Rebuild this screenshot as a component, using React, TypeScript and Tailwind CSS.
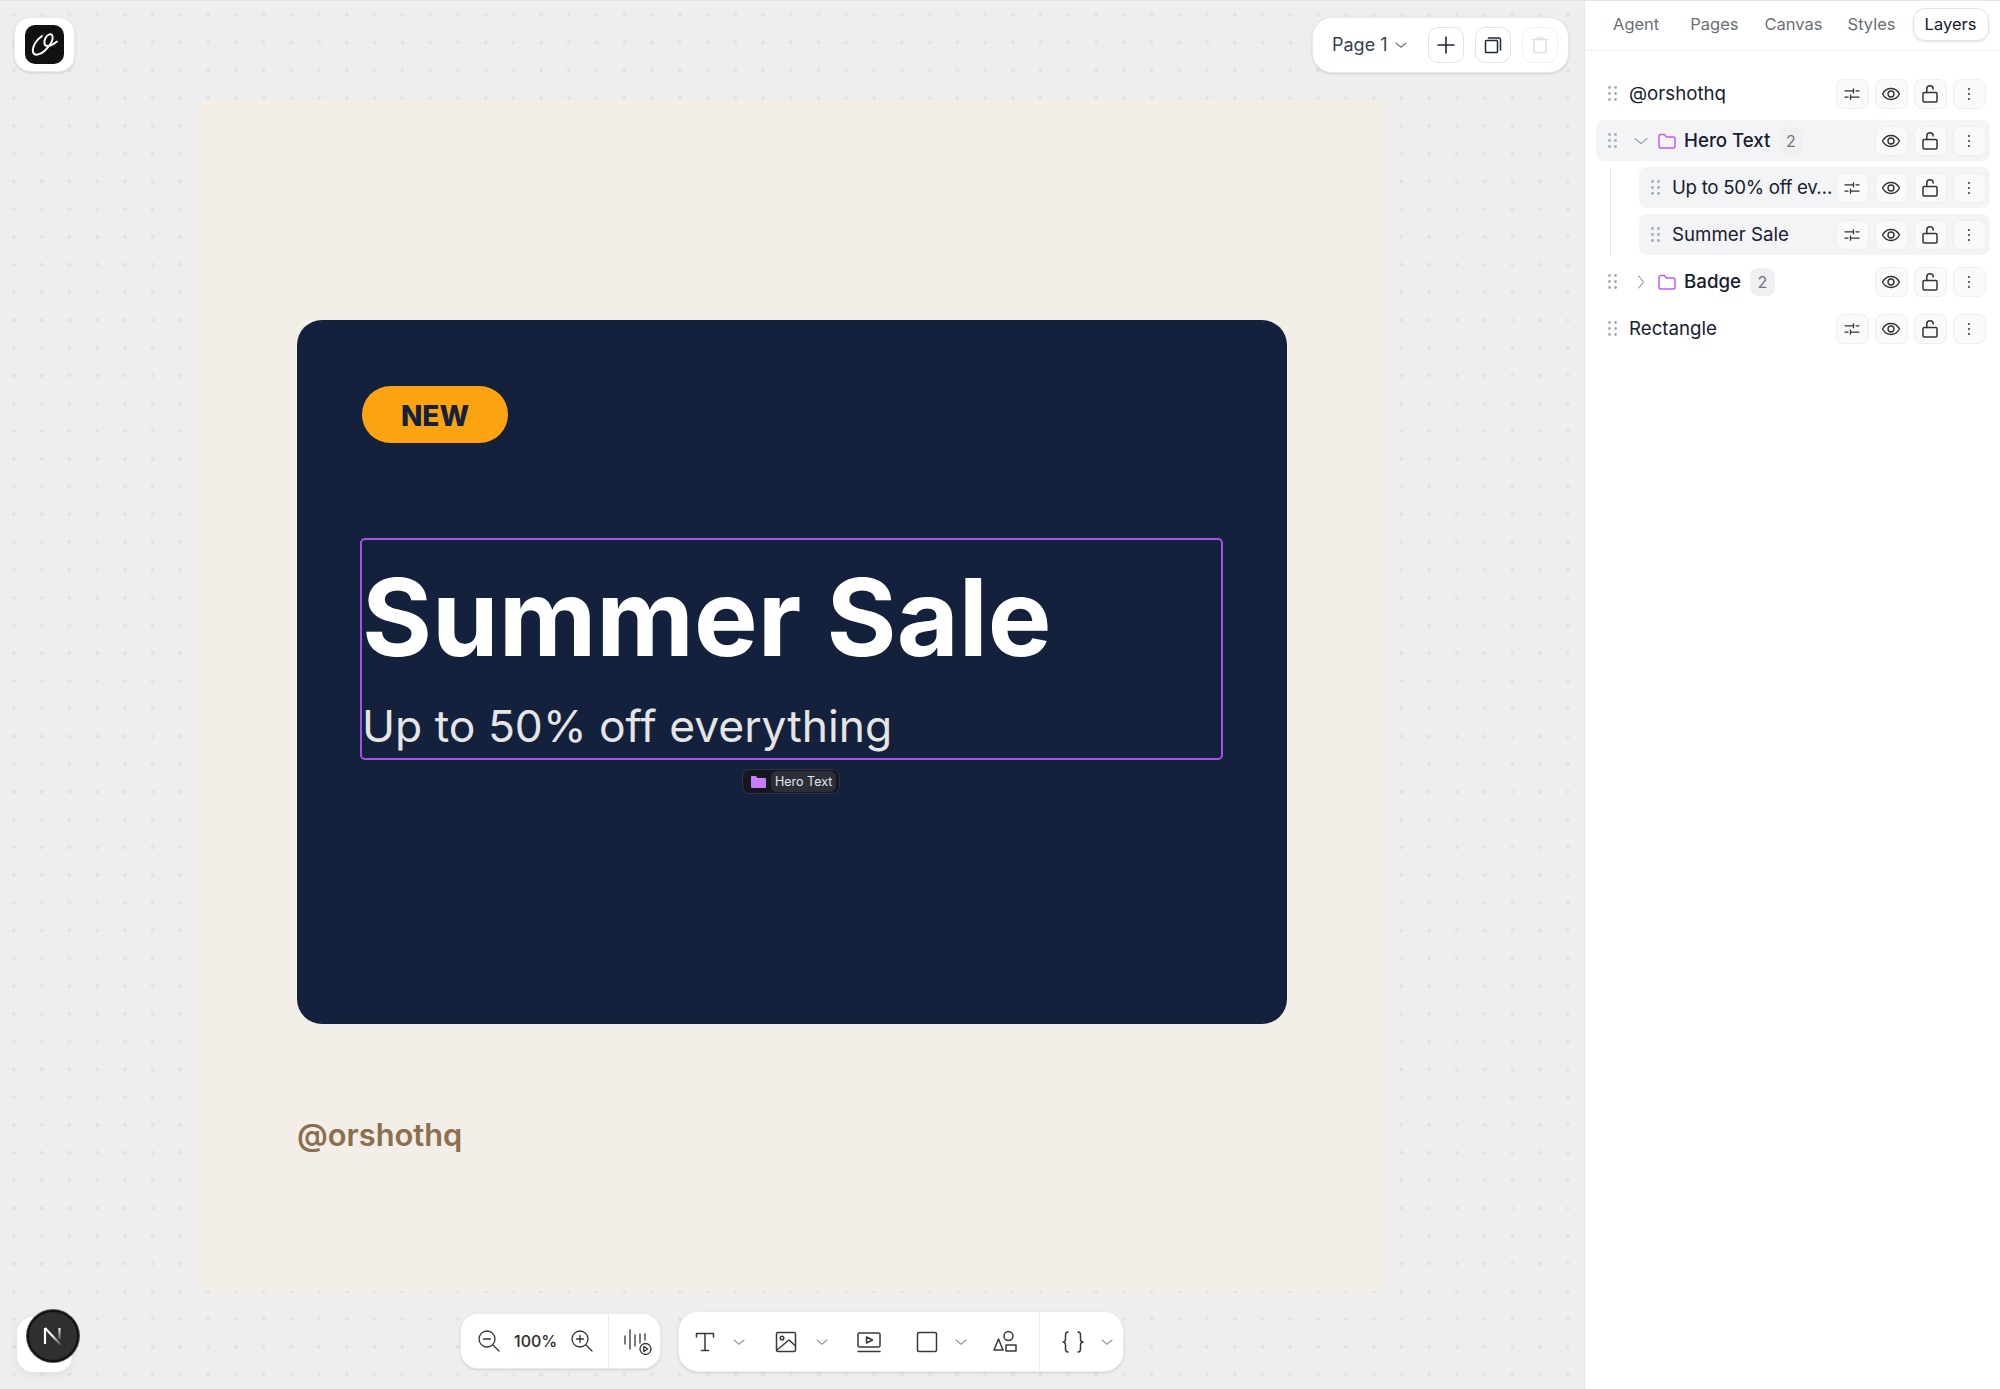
import React from "react";

const Ic: React.FC<{ s?: number; w?: number; c?: string; sw?: number; children: React.ReactNode }> = ({ s = 20, w, c = "currentColor", sw = 1.5, children }) => (
  <svg width={w || s} height={s} viewBox={`0 0 ${w || s} ${s}`} fill="none" stroke={c} strokeWidth={sw} strokeLinecap="round" strokeLinejoin="round" className="shrink-0">
    {children}
  </svg>
);

const Grip = () => (
  <svg width="9" height="15" viewBox="0 0 9 15" fill="#a3abb8" className="shrink-0">
    {[1.5, 7.5, 13.5].map((y) => (
      <g key={y}>
        <circle cx="1.5" cy={y} r="1.4" />
        <circle cx="7.5" cy={y} r="1.4" />
      </g>
    ))}
  </svg>
);

const Folder = () => (
  <Ic s={18} c="#c05cf5" sw={1.5}>
    <path d="M1 4a1.5 1.5 0 0 1 1.5-1.5h4l2 2.5h7A1.5 1.5 0 0 1 17 6.5v8a1.5 1.5 0 0 1-1.5 1.5h-13A1.5 1.5 0 0 1 1 14.500z" />
  </Ic>
);

const IconBtn: React.FC<{ children: React.ReactNode }> = ({ children }) => (
  <span className="w-[33px] h-[30px] rounded-lg border border-[#eeeeee] bg-[#fafafa] flex items-center justify-center text-[#333333] shrink-0">{children}</span>
);

const Tune = () => (
  <Ic s={16} sw={1.3}>
    <path d="M1 4.800h8M12 4.800h3M9.500 2.800v4M1 11.200h3M7 11.200h8M6.500 9.200v4" />
  </Ic>
);
const Eye = () => (
  <Ic s={20} sw={1.4}>
    <path d="M1.500 10c2-3.600 5-5.500 8.500-5.500s6.500 1.900 8.500 5.500c-2 3.600-5 5.500-8.500 5.500S3.500 13.600 1.500 10z" />
    <circle cx="10" cy="10" r="3" />
  </Ic>
);
const Lock = () => (
  <Ic s={18} sw={1.5}>
    <rect x="2" y="7.500" width="14" height="9.500" rx="1.200" />
    <path d="M5.800 7.500V4a3.200 3.200 0 0 1 6.400 0" />
  </Ic>
);
const Dots = () => (
  <svg width="4" height="14" viewBox="0 0 4 14" fill="#444" className="shrink-0">
    <circle cx="2" cy="2" r="1.100" />
    <circle cx="2" cy="7" r="1.100" />
    <circle cx="2" cy="12" r="1.100" />
  </svg>
);

const Chev: React.FC<{ c?: string; s?: number }> = ({ c = "#9a9a9a", s = 12 }) => (
  <Ic s={s} c={c} sw={1.100}>
    <path d={`M1 ${s * 0.33}l${s / 2 - 1} ${s * 0.36}l${s / 2 - 1} -${s * 0.36}`} />
  </Ic>
);

type Row = { name: string; depth: 0 | 1 | 2; folder?: "open" | "closed"; count?: number; tune: boolean; bg?: boolean };
const rows: Row[] = [
  { name: "@orshothq", depth: 0, tune: true },
  { name: "Hero Text", depth: 1, folder: "open", count: 2, tune: false, bg: true },
  { name: "Up to 50% off ev…", depth: 2, tune: true, bg: true },
  { name: "Summer Sale", depth: 2, tune: true, bg: true },
  { name: "Badge", depth: 1, folder: "closed", count: 2, tune: false },
  { name: "Rectangle", depth: 0, tune: true },
];

const tabs = [
  { label: "Agent", cls: "ml-[28px]" },
  { label: "Pages", cls: "ml-[31px]" },
  { label: "Canvas", cls: "ml-[26px]" },
  { label: "Styles", cls: "ml-[25px]" },
];

const LayerRow: React.FC<{ r: Row }> = ({ r }) => (
  <div className={`h-[41px] flex items-center rounded-lg pr-[4.500px] ${r.depth === 2 ? "ml-[43px]" : ""} ${r.bg ? "bg-[#f3f4f6]" : ""}`}>
    <span className="ml-[12px] flex"><Grip /></span>
    {r.folder && (
      <>
        <span className={`ml-[17px] w-[14px] flex justify-center ${r.folder === "closed" ? "-rotate-90" : ""}`}>
          <Chev c="#8b93a3" s={14} />
        </span>
        <span className="ml-[10px] flex"><Folder /></span>
      </>
    )}
    <span className={`text-[18.700px] leading-tight pt-[1px] whitespace-nowrap text-[#18202f] ${r.folder ? "ml-[8px] font-medium" : "ml-[12px]"} ${r.name.startsWith("Up") ? "tracking-[-0.3px]" : ""}`}>{r.name}</span>
    {r.count && <span className={`ml-[9px] h-[28px] rounded-lg bg-[#f0f0f0] text-[16px] text-[#6b7280] flex items-center justify-center ${r.name === "Badge" ? "w-[25px]" : "w-[23px]"}`}>{r.count}</span>}
    <div className="ml-auto flex gap-[6px]">
      {r.tune && <IconBtn><Tune /></IconBtn>}
      <IconBtn><Eye /></IconBtn>
      <IconBtn><Lock /></IconBtn>
      <IconBtn><Dots /></IconBtn>
    </div>
  </div>
);

const App: React.FC = () => {
  return (
    <div className="w-[2000px] h-[1389px] flex overflow-hidden bg-white font-['Inter',sans-serif] border-t border-[#e5e5e8]">
      <div className="relative w-[1584px] h-full bg-[#eeeeef] bg-[radial-gradient(circle,#e2e2e5_1.600px,transparent_2.200px)] bg-[size:27.750px_27.750px]">
        {/* artboard */}
        <div className="ml-[197px] mt-[99px] w-[1190px] h-[1191px] bg-[#f3eee7] pt-[220px] pl-[100px]">
          <div className="w-[990px] h-[704px] rounded-[25px] bg-[#14213d] pt-[66px] pl-[63px]">
            <div className="ml-[2px] w-[146px] h-[57px] rounded-full bg-[#fca311] flex items-center justify-center text-[28px] pt-[2px] font-extrabold text-[#14213d]">NEW</div>
            <div className="relative mt-[95px] w-[863px] h-[222px] border-2 border-[#a652ea] rounded-[5px] flex flex-col">
              <div className="text-[107px] leading-[128px] mt-[13px] font-bold text-white whitespace-nowrap">Summer Sale</div>
              <div className="text-[44.400px] leading-[58px] mt-[16px] text-[#e5e5e5] whitespace-nowrap">Up to 50% off everything</div>
              <div className="absolute left-[380px] top-[229px] w-[98px] h-[25px] rounded-lg bg-[#15171f] border border-[#31343f] flex items-center pl-[8px]">
                <svg width="15" height="13" viewBox="0 0 15 13" fill="#c77dff" className="shrink-0">
                  <path d="M0 2a1 1 0 0 1 1-1h4l1.500 2H14a1 1 0 0 1 1 1v8a1 1 0 0 1-1 1H1a1 1 0 0 1-1-1z" />
                </svg>
                <span className="ml-[5px] h-[21px] px-[4px] rounded-md bg-[#2c2f3a] text-[12.500px] leading-[21px] text-[#e4e4e7] whitespace-nowrap">Hero Text</span>
              </div>
            </div>
          </div>
          <div className="mt-[92px] text-[30.800px] leading-[38px] font-semibold text-[#8b6f4e] whitespace-nowrap">@orshothq</div>
        </div>

        {/* logo */}
        <div className="absolute left-[14px] top-[16px] w-[61px] h-[55px] rounded-2xl bg-white border border-[#e9e9ee] shadow-sm flex items-center justify-center">
          <div className="w-[39px] h-[39px] rounded-[10px] bg-[#111111] flex items-center justify-center">
            <svg width="39" height="39" viewBox="0 0 39 39" fill="none" stroke="white" strokeLinecap="round">
              <path d="M17 11C11 15 7 22 8 27C9 31 15 30.500 20 25.500C25 20.500 28.500 14.500 27.500 11C26.500 8 22.500 9 20.500 13C18.500 17 19 21 22.500 21C25.500 21 29 19 32 16.500" strokeWidth="1.900" />
            </svg>
          </div>
        </div>

        {/* page toolbar */}
        <div className="absolute left-[1312px] top-[16px] w-[257px] h-[56px] rounded-[20px] bg-white border border-[#e9e9ee] shadow-sm flex items-center pl-[19px]">
          <span className="text-[18px] leading-none text-[#374151] whitespace-nowrap">Page 1</span>
          <span className="ml-[7px] flex"><Chev c="#6b7280" s={12} /></span>
          <span className="ml-[21px] w-[36px] h-[36px] rounded-[10px] border border-[#e2e2e5] flex items-center justify-center">
            <Ic s={20} c="#1f2937" sw={1.600}><path d="M10 2v16M2 10h16" /></Ic>
          </span>
          <span className="ml-[11px] w-[36px] h-[36px] rounded-[10px] border border-[#e2e2e5] flex items-center justify-center">
            <Ic s={18} c="#1f2937" sw={1.500}><rect x="1.500" y="4.500" width="12" height="12" rx="0.800" /><path d="M4.500 2h10.500a1.500 1.500 0 0 1 1.500 1.500v10.500" /></Ic>
          </span>
          <span className="ml-[11px] w-[36px] h-[36px] rounded-[10px] border border-[#f0f0f2] flex items-center justify-center">
            <Ic s={18} c="#e2e2e6" sw={1.500}><path d="M1.500 3.500h15M3 3.500v13h12v-13M6.500 3.500v-2h5v2" /></Ic>
          </span>
        </div>

        {/* N badge */}
        <div className="absolute left-[17px] top-[1316px] w-[55px] h-[55px] rounded-2xl bg-white shadow-[0_2px_10px_rgba(0,0,0,0.08)]" />
        <div className="absolute left-[27px] top-[1309px] w-[52px] h-[52px] rounded-full bg-[#2f2f2f] border-2 border-[#111111] shadow-[0_0_0_1px_#555] flex items-center justify-center">
          <svg width="22" height="22" viewBox="0 0 22 22" fill="none">
            <defs>
              <linearGradient id="nfade" x1="0" y1="0" x2="1" y2="1">
                <stop offset="0.400" stopColor="white" />
                <stop offset="1" stopColor="white" stopOpacity="0.100" />
              </linearGradient>
              <linearGradient id="nfade2" x1="0" y1="0" x2="0" y2="1">
                <stop offset="0" stopColor="white" />
                <stop offset="1" stopColor="white" stopOpacity="0.200" />
              </linearGradient>
            </defs>
            <path d="M3 3v16" stroke="white" strokeWidth="2.200" />
            <path d="M3 3L19 20" stroke="url(#nfade)" strokeWidth="2.200" />
            <rect x="16.500" y="3" width="2" height="11" fill="url(#nfade2)" />
          </svg>
        </div>

        {/* zoom toolbar */}
        <div className="absolute left-[460px] top-[1312px] w-[201px] h-[56px] rounded-[18px] bg-white shadow-sm border border-[#ececf0] flex items-center pl-[16px] text-[#333333]">
          <Ic s={24} sw={1.300}><circle cx="10" cy="10" r="8" /><path d="M6.500 10h7M16 16l6 6" /></Ic>
          <span className="ml-[13px] text-[16px] leading-none font-medium whitespace-nowrap text-[#2b2b2b]">100%</span>
          <span className="ml-[13px] flex">
            <Ic s={24} sw={1.300}><circle cx="10" cy="10" r="8" /><path d="M6.500 10h7M10 6.500v7M16 16l6 6" /></Ic>
          </span>
          <span className="ml-[14px] w-px h-[56px] bg-[#ececf0]" />
          <span className="ml-[14px] flex">
            <Ic s={30} sw={1.300}>
              <path d="M2 10v8M7 4v19M12 9v11M17 8v9M22 8v6" />
              <circle cx="22.500" cy="23" r="5.500" fill="white" />
              <path d="M20.800 20.500v5l4-2.500z" />
            </Ic>
          </span>
        </div>

        {/* tools toolbar */}
        <div className="absolute left-[678px] top-[1310px] w-[446px] h-[61px] rounded-[20px] bg-white shadow-sm border border-[#ececf0] flex items-center pl-[14px] text-[#383838]">
          <Ic s={24} sw={1.500}><path d="M3.500 7V3.500h17V7M12 3.500v17M8.500 20.500h7" /></Ic>
          <span className="ml-[16px] flex"><Chev /></span>
          <span className="ml-[29px] flex">
            <Ic s={24} sw={1.500}><rect x="2.500" y="2.500" width="19" height="19" rx="1.500" /><circle cx="8" cy="8" r="1.800" /><path d="M3 20L15 10l6.500 6" /></Ic>
          </span>
          <span className="ml-[18px] flex"><Chev /></span>
          <span className="ml-[29px] flex">
            <Ic s={24} sw={1.500}><rect x="1" y="3" width="22" height="14" rx="1.500" /><path d="M1 21.500h22M9.500 7l6 3-6 3z" /></Ic>
          </span>
          <span className="ml-[34px] flex">
            <Ic s={24} sw={1.500}><rect x="2.500" y="2.500" width="19" height="19" rx="1.500" /></Ic>
          </span>
          <span className="ml-[16px] flex"><Chev /></span>
          <span className="ml-[26px] flex">
            <Ic s={24} sw={1.500}><path d="M5.500 9L1 20h9z" /><circle cx="15.500" cy="6" r="4.500" /><rect x="13" y="15" width="10" height="6" /></Ic>
          </span>
          <span className="ml-[22px] w-px h-[61px] bg-[#ececf0]" />
          <span className="ml-[21px] flex">
            <Ic s={24} sw={1.500}><path d="M7 2c-2 0-2.500 1-2.500 3v4c0 2-.5 3-2.500 3 2 0 2.500 1 2.500 3v4c0 2 .5 3 2.500 3M17 2c2 0 2.500 1 2.500 3v4c0 2 .5 3 2.500 3-2 0-2.500 1-2.500 3v4c0 2-.5 3-2.500 3" /></Ic>
          </span>
          <span className="ml-[16px] flex"><Chev /></span>
        </div>
      </div>

      {/* right panel */}
      <div className="w-[416px] h-full border-l-[1px] border-[#e8e8ea] bg-white">
        <div className="h-[50px] border-b border-[#f0f0f2] flex items-center">
          {tabs.map((t) => (
            <span key={t.label} className={`${t.cls} text-[16.500px] -mt-[2px] text-[#6b6f76] whitespace-nowrap`}>{t.label}</span>
          ))}
          <span className="ml-[17px] -mt-[2px] w-[76px] h-[33px] rounded-xl border border-[#e4e4e7] shadow-sm text-[16.500px] text-[#18202f] flex items-center justify-center">Layers</span>
        </div>
        <div className="relative mt-[22px] ml-[11px] mr-[10px] flex flex-col gap-[6px]">
          <span className="absolute left-[14px] top-[94px] w-px h-[89px] bg-[#e5e7eb]" />
          {rows.map((r) => (
            <LayerRow key={r.name} r={r} />
          ))}
        </div>
      </div>
    </div>
  );
};

export default App;
